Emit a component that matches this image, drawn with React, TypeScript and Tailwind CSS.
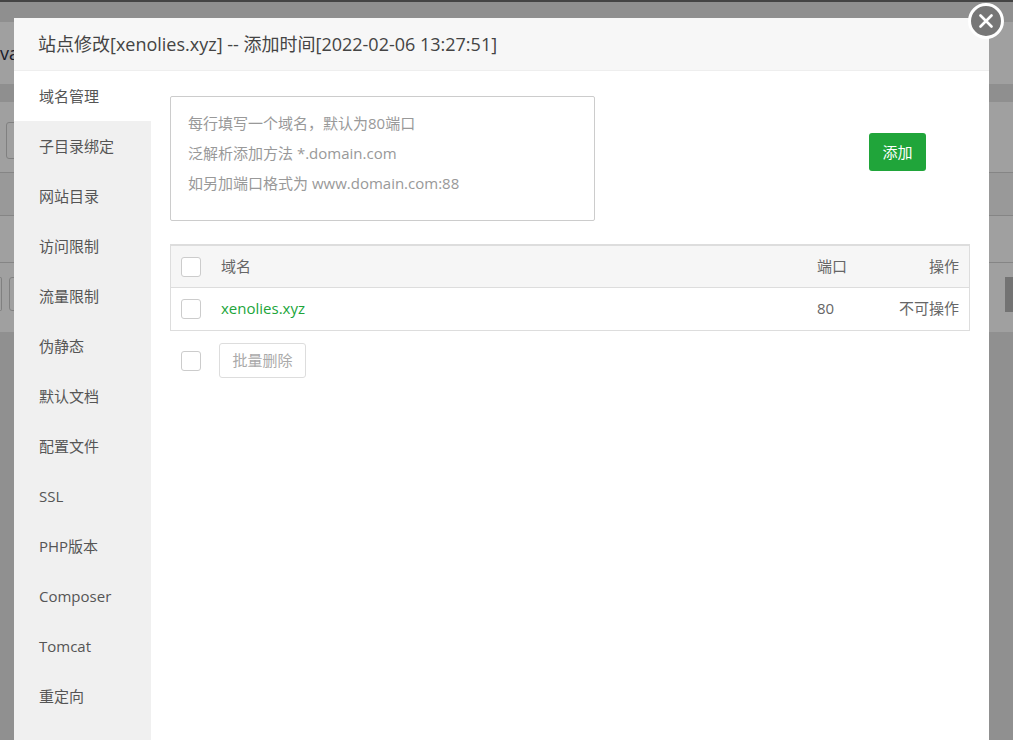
import React from 'react';

const FONT = "font-['Open_Sans','Noto_Sans_CJK_SC',sans-serif]";

const tabs = ['域名管理', '子目录绑定', '网站目录', '访问限制', '流量限制', '伪静态', '默认文档', '配置文件', 'SSL', 'PHP版本', 'Composer', 'Tomcat', '重定向'];

const Check = () => <span className="block w-5 h-5 bg-white border border-[#ccc] rounded-[3px] shrink-0" />;

export default function App() {
    return (
        <div className={`relative w-[1013px] h-[740px] overflow-hidden bg-[#999] ${FONT}`}>
            {/* page dimmed behind the modal */}
            <div className="flex flex-col h-full">
                <div className="h-[2px] bg-[#444]" />
                <div className="h-[20px] bg-[#8f8f8f]" />
                <div className="h-[62px] bg-[#a0a0a0] text-[18px] leading-[24px] text-[#1a1a2a] pt-[19px]">va</div>
                <div className="h-[18px] bg-[#8f8f8f]" />
                <div className="h-[70px] bg-[#a0a0a0] pt-[20px] pl-[6px]">
                    <div className="w-[30px] h-[37px] border border-[#808080] rounded-[3px]" />
                </div>
                <div className="h-[43px] bg-[#999] border-t border-[#858585]" />
                <div className="h-[47px] bg-[#a0a0a0] border-t border-[#858585]" />
                <div className="h-[70px] bg-[#a0a0a0] border-t border-[#858585] pt-[14px]">
                    <div className="flex justify-between">
                        <div className="flex gap-[7px]">
                            <div className="w-[2px] h-[34px] border border-l-0 border-[#808080] rounded-r-[3px]" />
                            <div className="w-[12px] h-[34px] border border-[#808080] rounded-[3px]" />
                        </div>
                        <div className="w-[8px] h-[35px] bg-[#737373]" />
                    </div>
                </div>
                <div className="flex-1 bg-[#909090]" />
            </div>

            {/* modal */}
            <div className="absolute left-[14px] top-[18px] w-[975px] h-[740px] bg-white flex flex-col">
                <div className="h-[53px] shrink-0 bg-[#f7f7f7] border-b border-[#eee] pl-[24px] text-[18px] leading-[52px] text-[#444] whitespace-nowrap">
                    站点修改[xenolies.xyz] -- 添加时间[2022-02-06 13:27:51]
                </div>
                <div className="flex flex-1">
                    <div className="w-[137px] shrink-0 bg-[#f0f0f0]">
                        {tabs.map((t, i) => (
                            <div key={t} className={`h-[50px] pl-[25px] text-[15px] leading-[50px] text-[#555] ${i === 0 ? 'bg-white' : ''}`}>{t}</div>
                        ))}
                    </div>
                    <div className="flex-1 pl-[19px] pr-[19px] pt-[25px]">
                        <div className="flex items-start">
                            <div className="w-[425px] h-[125px] border border-[#ccc] rounded-[2px] pl-[17px] pt-[11px] text-[15px] leading-[30px] text-[#999]">
                                <div>每行填写一个域名，默认为80端口</div>
                                <div>泛解析添加方法 *.domain.com</div>
                                <div>如另加端口格式为 www.domain.com:88</div>
                            </div>
                            <button className="mt-[37px] ml-[274px] w-[57px] h-[38px] bg-[#20a53a] rounded-[3px] text-white text-[15px]">添加</button>
                        </div>
                        <div className="mt-[23px] border border-[#ddd] border-t-2 text-[15px] text-[#666]">
                            <div className="h-[42px] flex items-center bg-[#f6f6f6] border-b border-[#ddd] pl-[10px] pr-[10px]">
                                <Check />
                                <span className="ml-[20px] flex-1">域名</span>
                                <span className="w-[82px]">端口</span>
                                <span className="w-[60px] text-right">操作</span>
                            </div>
                            <div className="h-[42px] flex items-center pl-[10px] pr-[10px]">
                                <Check />
                                <span className="ml-[20px] flex-1 text-[#20a53a] -mt-[2px]">xenolies.xyz</span>
                                <span className="w-[82px] -mt-[2px]">80</span>
                                <span className="w-[60px] text-right whitespace-nowrap -mt-[2px]">不可操作</span>
                            </div>
                        </div>
                        <div className="mt-[12px] flex items-center pl-[11px]">
                            <Check />
                            <button className="ml-[18px] w-[87px] h-[35px] bg-white border border-[#ddd] rounded-[3px] text-[15px] text-[#aaa]">批量删除</button>
                        </div>
                    </div>
                </div>
            </div>

            {/* close button */}
            <button className="absolute left-[968px] top-[3px] w-[36px] h-[36px] rounded-full bg-[#777] border-[3px] border-white flex items-center justify-center" aria-label="关闭">
                <svg width="14" height="14" viewBox="0 0 14 14" fill="none" stroke="white" strokeWidth="2.6" strokeLinecap="round">
                    <path d="M1.5 1.5 12.5 12.5M12.5 1.5 1.5 12.5" />
                </svg>
            </button>
        </div>
    );
}
